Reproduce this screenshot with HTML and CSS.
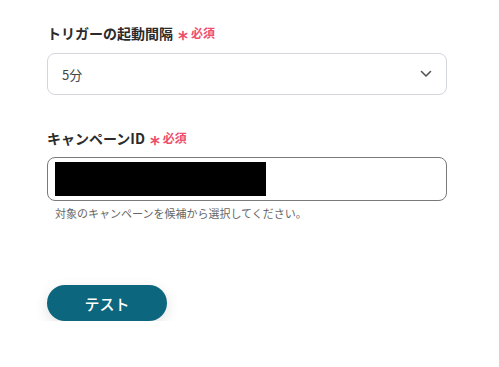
FILE: index.html
```html
<!DOCTYPE html>
<html lang="ja">
<head>
<meta charset="utf-8">
<link rel="stylesheet" href="styles.css">
</head>
<body>
<div class="form">
  <div class="field">
    <div class="label">トリガーの起動間隔<span class="req"><span class="ast">*</span>必須</span></div>
    <div class="select">
      <span class="value">5分</span>
      <svg class="chev" width="12" height="8" viewBox="0 0 12 8"><path d="M1.5 1.5 L6 6 L10.5 1.5" fill="none" stroke="#555" stroke-width="1.6" stroke-linecap="round" stroke-linejoin="round"/></svg>
    </div>
  </div>
  <div class="field field2">
    <div class="label">キャンペーンID<span class="req"><span class="ast">*</span>必須</span></div>
    <div class="input"><div class="redact"></div></div>
    <div class="help">対象のキャンペーンを候補から選択してください。</div>
  </div>
  <button class="btn">テスト</button>
</div>
</body>
</html>
```
FILE: styles.css
```css
html, body { margin: 0; padding: 0; background: #fff; }
body { font-family: "Noto Sans CJK JP", "Noto Sans", sans-serif; color: #333; }
.form { padding: 22px 53px 0 47px; display: flex; flex-direction: column; }
.label { font-size: 14px; font-weight: 700; color: #2b2b2b; line-height: 22px; display: flex; align-items: center; }
.req { color: #ee4d6c; font-size: 12px; font-weight: 700; margin-left: 5px; display: flex; align-items: center; }
.ast { font-family: "DejaVu Sans", sans-serif; font-size: 19px; margin-right: 3px; line-height: 12px; position: relative; top: 5px; }
.select { margin-top: 9px; height: 42px; border: 1px solid #d3d6dc; border-radius: 8px; box-sizing: border-box; display: flex; align-items: center; justify-content: space-between; padding: 0 14px 0 14px; margin-right: -1px; }
.value { font-size: 13px; color: #444; }
.field2 { margin-top: 32px; }
.input { margin-top: 8px; height: 44px; border: 1px solid #7a7a7a; border-radius: 8px; box-sizing: border-box; padding: 4px 7px; margin-right: -1px; }
.redact { width: 211px; height: 34px; background: #000; }
.help { font-size: 11px; color: #666; margin-top: 4px; padding-left: 8px; line-height: 16px; }
.btn { margin-top: 64px; width: 120px; height: 36px; border: none; border-radius: 18px; background: #0c667e; color: #fff; font-family: inherit; font-size: 15px; font-weight: 500; box-shadow: 0 4px 14px rgba(0,0,0,0.12); cursor: pointer; }
```
